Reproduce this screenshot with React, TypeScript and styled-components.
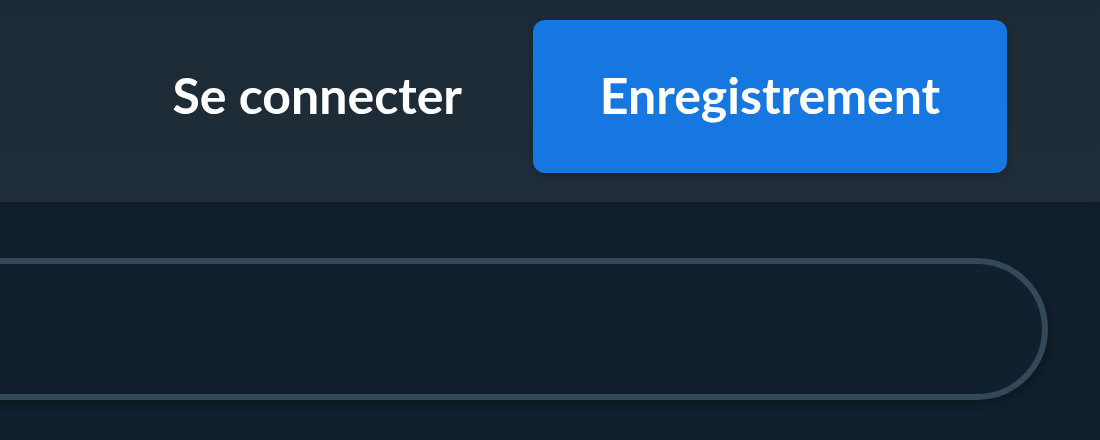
import React from 'react';
import styled, {createGlobalStyle} from 'styled-components';

const GlobalStyle = createGlobalStyle`
  html, body {
    margin: 0;
    padding: 0;
    background: #11202e;
    overflow: hidden;
  }

  body {
    font-family: Lato, "Noto Sans", sans-serif;
  }
`;

const Page = styled.div`
  width: 1100px;
  height: 440px;
  background: #11202e;
  overflow: hidden;
`;

const Header = styled.header`
  height: 202px;
  box-sizing: border-box;
  padding: 20px 93px 0 0;
  display: flex;
  justify-content: flex-end;
  align-items: flex-start;
  gap: 71px;
  background: linear-gradient(180deg, #1c2a36 0%, #1f2d39 100%);
  box-shadow: 0 2px 6px rgba(0, 0, 0, 0.25);
  position: relative;
  z-index: 1;
`;

const LoginLink = styled.a`
  height: 153px;
  display: flex;
  align-items: center;
  color: #ffffff;
  font-size: 50px;
  font-weight: 700;
  text-decoration: none;
  padding-bottom: 4px;
  box-sizing: border-box;
`;

const SignupButton = styled.button`
  width: 474px;
  height: 153px;
  border: none;
  border-radius: 12px;
  background: #1777e0;
  color: #ffffff;
  font-family: inherit;
  font-size: 50px;
  font-weight: 700;
  padding: 0 0 4px;
  cursor: pointer;
  box-shadow: 0 2px 6px rgba(0, 0, 0, 0.2);
`;

const SearchRow = styled.div`
  padding: 56px 52px 0 0;
`;

const SearchBox = styled.input`
  display: block;
  margin-left: -200px;
  width: calc(100% + 200px);
  height: 142px;
  box-sizing: border-box;
  border: 6px solid #33495a;
  border-radius: 71px;
  background: #11202e;
  outline: none;
  box-shadow: 3px 4px 8px rgba(0, 0, 0, 0.25);
`;

export default function App() {
  return (
    <Page>
      <GlobalStyle/>
      <Header>
        <LoginLink href="#">Se connecter</LoginLink>
        <SignupButton>Enregistrement</SignupButton>
      </Header>
      <SearchRow>
        <SearchBox type="text" aria-label="Rechercher"/>
      </SearchRow>
    </Page>
  );
}
